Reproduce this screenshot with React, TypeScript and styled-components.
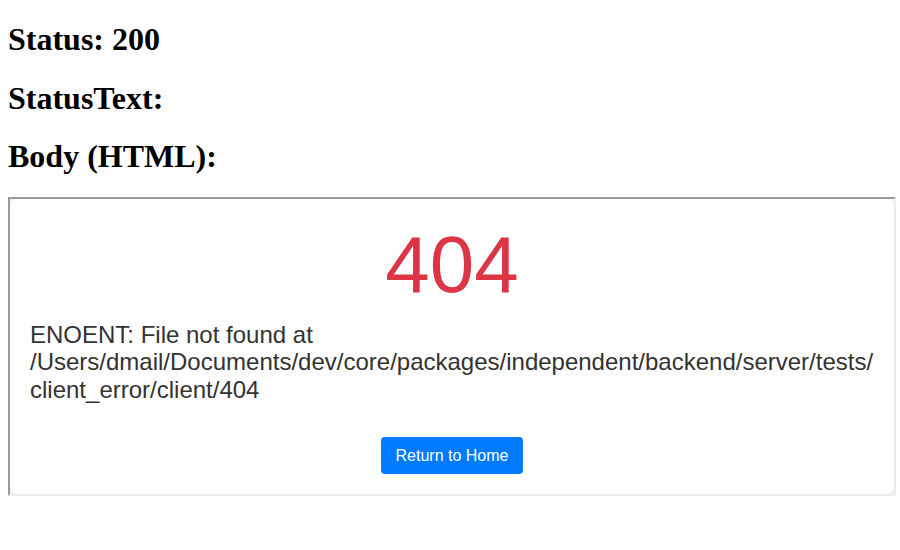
import React from "react";
import styled, { createGlobalStyle } from "styled-components";

const GlobalStyle = createGlobalStyle`
  html, body { background: #ffffff; }
  body {
    margin: 0 4px 8px 8px;
    font-family: "Liberation Serif", "Times New Roman", serif;
    color: #000000;
  }
`;

const Heading = styled.h1`
  font-family: "Liberation Serif", "Times New Roman", serif;
  font-size: 32px;
  font-weight: bold;
  margin: 21.44px 0;
  line-height: normal;
`;

const Frame = styled.div`
  box-sizing: border-box;
  width: 100%;
  border-style: solid;
  border-width: 2px;
  border-color: #9a9a9a #ececec #ececec #9a9a9a;
  background: #f6f6f6;
  overflow: hidden;
`;

const Card = styled.div`
  background: #ffffff;
  border-radius: 8px;
  box-shadow: 0 1px 3px rgba(0, 0, 0, 0.08);
  padding: 20px;
  font-family: "Liberation Sans", Arial, Helvetica, sans-serif;
  color: #333333;
`;

const Code = styled.div`
  font-size: 80px;
  line-height: 92px;
  color: #dc3545;
  text-align: center;
  margin: 0;
`;

const Message = styled.p`
  font-size: 24px;
  line-height: 27.6px;
  margin: 10px 0 0;
  overflow-wrap: break-word;
  word-wrap: break-word;
`;

const Actions = styled.div`
  display: flex;
  justify-content: center;
  margin-top: 33px;
`;

const HomeButton = styled.button`
  background: #007bff;
  color: #ffffff;
  border: none;
  border-radius: 4px;
  padding: 10px 15px;
  font-family: "Liberation Sans", Arial, Helvetica, sans-serif;
  font-size: 16px;
  line-height: 17px;
  cursor: pointer;
`;

export default function App() {
  return (
    <>
      <GlobalStyle />
      <Heading>Status: 200</Heading>
      <Heading>StatusText:</Heading>
      <Heading>Body (HTML):</Heading>
      <Frame>
        <Card>
          <Code>404</Code>
          <Message>
            ENOENT: File not found at
            /Users/dmail/Documents/dev/core/packages/independent/backend/server/tests/client_error/client/404
          </Message>
          <Actions>
            <HomeButton>Return to Home</HomeButton>
          </Actions>
        </Card>
      </Frame>
    </>
  );
}
